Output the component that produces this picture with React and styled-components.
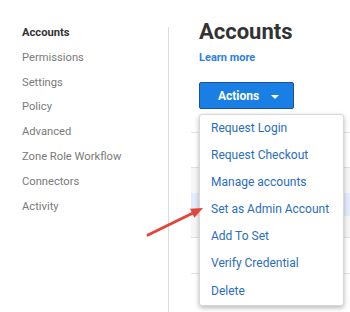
import styled, { createGlobalStyle } from "styled-components";

const GlobalStyle = createGlobalStyle`
  html, body {
    margin: 0;
    padding: 0;
    background: #ffffff;
    font-family: Roboto, "Liberation Sans", Arial, sans-serif;
  }
`;

const Page = styled.div`
  position: relative;
  display: flex;
  width: 350px;
  height: 312px;
  overflow: hidden;
  background: #ffffff;
`;

const Sidebar = styled.nav`
  display: flex;
  flex-direction: column;
  width: 146px;
  padding: 21px 0 0 22px;
`;

const NavItem = styled.div`
  height: 24.8px;
  line-height: 24.8px;
  font-size: 11.2px;
  font-weight: ${(p) => (p.$active ? 700 : 400)};
  color: ${(p) => (p.$active ? "#333333" : "#7a7a7a")};
  white-space: nowrap;
`;

const Divider = styled.div`
  width: 1px;
  margin-top: 27px;
  background: #dcdcdc;
`;

const Main = styled.main`
  flex: 1;
  display: flex;
  flex-direction: column;
  padding: 18px 0 0 30px;
`;

const Heading = styled.h1`
  margin: 0;
  font-size: 22px;
  line-height: 28px;
  font-weight: 700;
  color: #333333;
`;

const LearnMore = styled.a`
  margin-top: 5px;
  font-size: 11px;
  line-height: 14px;
  font-weight: 700;
  color: #2d7fe3;
  text-decoration: none;
`;

const ActionsWrap = styled.div`
  position: relative;
  margin-top: 17px;
  align-self: flex-start;
`;

const ActionsButton = styled.button`
  display: flex;
  align-items: center;
  justify-content: center;
  gap: 12px;
  width: 95px;
  height: 27px;
  padding: 0 0 0 4px;
  border: 1px solid #1e4f9c;
  border-radius: 2px;
  background: #1a7fe5;
  color: #ffffff;
  font-family: inherit;
  font-size: 12px;
  font-weight: 700;
`;

const Caret = styled.span`
  width: 0;
  height: 0;
  margin-top: 2px;
  border-left: 4px solid transparent;
  border-right: 4px solid transparent;
  border-top: 4px solid #ffffff;
`;

const Menu = styled.ul`
  position: absolute;
  top: 32px;
  left: 0;
  z-index: 2;
  width: 143px;
  margin: 0;
  padding: 0;
  list-style: none;
  background: #ffffff;
  border: 1px solid #d8d8d8;
  border-radius: 3px;
  box-shadow: 0 2px 5px rgba(0, 0, 0, 0.28);
`;

const MenuItem = styled.li`
  height: 27.1px;
  line-height: 27.1px;
  padding-left: 11px;
  font-size: 12px;
  color: #2b6dbd;
  white-space: nowrap;
`;

const Table = styled.div`
  margin: 0 0 0 -8px;
`;

const Row = styled.div`
  height: ${(p) => p.$h}px;
  border-top: ${(p) => (p.$line ? "1px solid #e2e2e2" : "none")};
  background: ${(p) => p.$bg || "transparent"};
  box-sizing: border-box;
`;

const Arrow = styled.svg`
  position: absolute;
  left: 140px;
  top: 200px;
  z-index: 3;
  overflow: visible;
`;

const navItems = [
  "Accounts",
  "Permissions",
  "Settings",
  "Policy",
  "Advanced",
  "Zone Role Workflow",
  "Connectors",
  "Activity",
];

const menuItems = [
  "Request Login",
  "Request Checkout",
  "Manage accounts",
  "Set as Admin Account",
  "Add To Set",
  "Verify Credential",
  "Delete",
];

const rows = [
  { h: 23 },
  { h: 35, line: true },
  { h: 26, line: true, bg: "#f7f7f7" },
  { h: 23, bg: "#e4edfb" },
  { h: 21, bg: "#f7f7f7" },
  { h: 36, line: true },
  { h: 40, line: true },
];

export default function App() {
  return (
    <>
      <GlobalStyle />
      <Page>
        <Sidebar>
          {navItems.map((item, idx) => (
            <NavItem key={item} $active={idx === 0}>
              {item}
            </NavItem>
          ))}
        </Sidebar>
        <Divider />
        <Main>
          <Heading>Accounts</Heading>
          <LearnMore href="#">Learn more</LearnMore>
          <ActionsWrap>
            <ActionsButton>
              Actions
              <Caret />
            </ActionsButton>
            <Menu>
              {menuItems.map((item) => (
                <MenuItem key={item}>{item}</MenuItem>
              ))}
            </Menu>
          </ActionsWrap>
          <Table>
            {rows.map((r, idx) => (
              <Row key={idx} $h={r.h} $line={r.line} $bg={r.bg} />
            ))}
          </Table>
        </Main>
        <Arrow width="70" height="45" viewBox="0 0 70 45">
          <line
            x1="8"
            y1="35"
            x2="53"
            y2="13"
            stroke="#e5443a"
            strokeWidth="3"
            strokeLinecap="round"
          />
          <polygon points="63,8 54.4,17.8 50,8.8" fill="#e5443a" />
        </Arrow>
      </Page>
    </>
  );
}
